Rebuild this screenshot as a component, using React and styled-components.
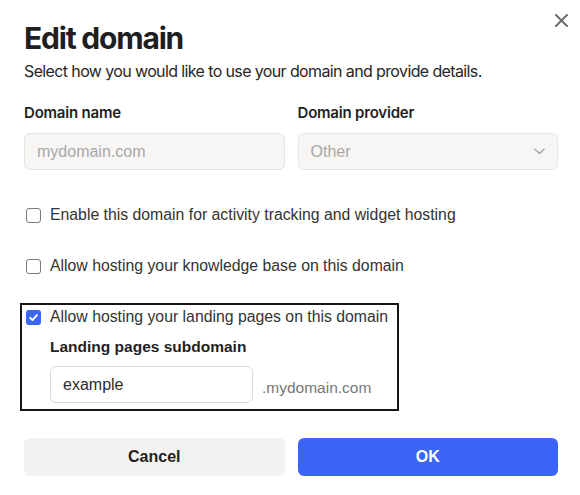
import React from "react";
import styled, { createGlobalStyle } from "styled-components";

const Global = createGlobalStyle`
  html, body { margin: 0; padding: 0; background: #ffffff; }
  body { font-family: "Liberation Sans", Arial, sans-serif; color: #222; }
  * { box-sizing: border-box; }
`;

const Dialog = styled.div`
  position: relative;
  width: 580px;
  height: 495px;
  padding: 20px 22px 0 24px;
  display: flex;
  flex-direction: column;
  background: #fff;
`;

const Close = styled.button`
  position: absolute;
  top: 12px;
  right: 11px;
  width: 16px;
  height: 16px;
  padding: 0;
  border: none;
  background: transparent;
  display: flex;
  align-items: center;
  justify-content: center;
  cursor: pointer;
`;

const Title = styled.h1`
  margin: 0;
  font-family: Inter, "Noto Sans", sans-serif;
  font-weight: 700;
  font-size: 30px;
  line-height: 36px;
  letter-spacing: -1.2px;
  color: #1f1f1f;
`;

const Subtitle = styled.p`
  margin: 3px 0 0;
  font-family: Inter, "Noto Sans", sans-serif;
  font-size: 16px;
  line-height: 24px;
  letter-spacing: -0.62px;
  color: #262626;
`;

const FieldGrid = styled.div`
  margin-top: 20px;
  display: grid;
  grid-template-columns: 1fr 1fr;
  column-gap: 13px;
`;

const Field = styled.div`
  display: flex;
  flex-direction: column;
  gap: 10px;
`;

const Label = styled.label`
  font-family: Inter, "Noto Sans", sans-serif;
  font-weight: 600;
  font-size: 15px;
  line-height: 20px;
  letter-spacing: -0.2px;
  color: #1f1f1f;
`;

const InputBox = styled.div`
  height: 37px;
  border: 1px solid ${(p) => (p.$disabled ? "#e8e5e0" : "#ddd8d0")};
  background: ${(p) => (p.$disabled ? "#f7f6f4" : "#ffffff")};
  border-radius: 6px;
  padding: 0 12px;
  display: flex;
  align-items: center;
  justify-content: space-between;
  font-family: "Liberation Sans", Arial, sans-serif;
  font-size: 16px;
  color: ${(p) => (p.$disabled ? "#a9a7a4" : "#2a2a2a")};
  width: ${(p) => p.$width || "auto"};
`;

const Options = styled.div`
  margin-top: 34px;
  display: flex;
  flex-direction: column;
  gap: 29px;
`;

const CheckRow = styled.label`
  display: flex;
  align-items: center;
  gap: 9px;
  height: 22px;
  font-family: "Liberation Sans", Arial, sans-serif;
  font-size: 15.8px;
  color: #333;
`;

const Box = styled.span`
  margin-left: 2px;
  width: 15px;
  height: 15px;
  border-radius: 3px;
  flex: none;
  display: flex;
  align-items: center;
  justify-content: center;
  border: ${(p) => (p.$checked ? "none" : "1.5px solid #7a7a7a")};
  background: ${(p) => (p.$checked ? "#3b66f5" : "#fff")};
`;

const Highlight = styled.div`
  align-self: flex-start;
  margin: -3px 0 0 -4px;
  padding: 1px 9px 6px 2px;
  border: 2px solid #161616;
  display: flex;
  flex-direction: column;
`;

const SubSection = styled.div`
  padding-left: 26px;
  margin-top: 9px;
  display: flex;
  flex-direction: column;
  gap: 9px;
`;

const SubLabel = styled.div`
  font-family: "Liberation Sans", Arial, sans-serif;
  font-weight: 700;
  font-size: 15.5px;
  line-height: 20px;
  color: #1f1f1f;
`;

const SubRow = styled.div`
  display: flex;
  align-items: flex-end;
  gap: 9px;
`;

const Suffix = styled.span`
  font-family: "Liberation Sans", Arial, sans-serif;
  font-size: 15.5px;
  color: #777;
  padding-bottom: 6px;
`;

const Actions = styled.div`
  margin-top: 27px;
  display: grid;
  grid-template-columns: 1fr 1fr;
  column-gap: 13px;
`;

const Button = styled.button`
  height: 38px;
  border: none;
  border-radius: 6px;
  font-family: "Liberation Sans", Arial, sans-serif;
  font-weight: 700;
  font-size: 16px;
  background: ${(p) => (p.$primary ? "#3b66f5" : "#f3f2f0")};
  color: ${(p) => (p.$primary ? "#ffffff" : "#1f1f1f")};
  cursor: pointer;
`;

const Check = () => (
  <svg width="11" height="11" viewBox="0 0 12 12" fill="none">
    <path d="M2.3 6.3 L4.9 8.8 L9.8 3.3" stroke="#fff" strokeWidth="2" strokeLinecap="round" strokeLinejoin="round" />
  </svg>
);

const Chevron = () => (
  <svg width="11" height="7" viewBox="0 0 11 7" fill="none">
    <path d="M1 1.2 L5.5 5.5 L10 1.2" stroke="#a9a7a4" strokeWidth="1.5" strokeLinecap="round" strokeLinejoin="round" />
  </svg>
);

const CloseIcon = () => (
  <svg width="13" height="13" viewBox="0 0 13 13" fill="none">
    <path d="M1 1 L12 12 M12 1 L1 12" stroke="#6e6e6e" strokeWidth="2" strokeLinecap="round" />
  </svg>
);

export default function App() {
  return (
    <>
      <Global />
      <Dialog>
        <Close aria-label="Close"><CloseIcon /></Close>
        <Title>Edit domain</Title>
        <Subtitle>Select how you would like to use your domain and provide details.</Subtitle>
        <FieldGrid>
          <Field>
            <Label>Domain name</Label>
            <InputBox $disabled>mydomain.com</InputBox>
          </Field>
          <Field>
            <Label>Domain provider</Label>
            <InputBox $disabled>
              <span>Other</span>
              <Chevron />
            </InputBox>
          </Field>
        </FieldGrid>
        <Options>
          <CheckRow><Box />Enable this domain for activity tracking and widget hosting</CheckRow>
          <CheckRow><Box />Allow hosting your knowledge base on this domain</CheckRow>
          <Highlight>
            <CheckRow><Box $checked><Check /></Box>Allow hosting your landing pages on this domain</CheckRow>
            <SubSection>
              <SubLabel>Landing pages subdomain</SubLabel>
              <SubRow>
                <InputBox $width="203px">example</InputBox>
                <Suffix>.mydomain.com</Suffix>
              </SubRow>
            </SubSection>
          </Highlight>
        </Options>
        <Actions>
          <Button>Cancel</Button>
          <Button $primary>OK</Button>
        </Actions>
      </Dialog>
    </>
  );
}
